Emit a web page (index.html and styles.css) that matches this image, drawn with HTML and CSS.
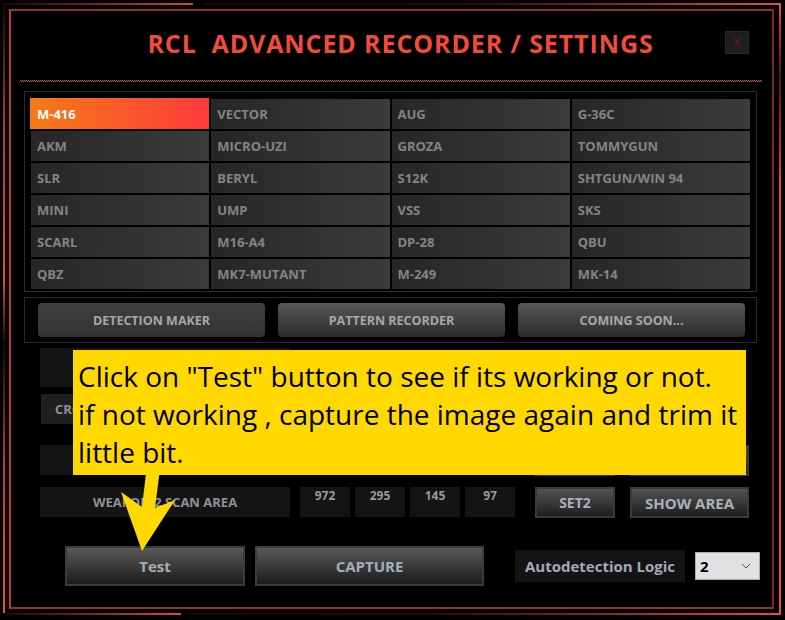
FILE: index.html
```html
<!DOCTYPE html>
<html>
<head>
  <title>RCL Advanced Recorder / Settings</title>
  <link rel="stylesheet" href="styles.css">
</head>
<body>
  <div class="frame-outer">
    <div class="frame-inner">
      <div class="header">
        <div class="title">RCL&nbsp; ADVANCED RECORDER / SETTINGS</div>
        <div class="close">X</div>
      </div>
      <div class="dots"></div>

      <div class="panel weapons">
        <div class="cell active">M-416</div>
        <div class="cell">VECTOR</div>
        <div class="cell">AUG</div>
        <div class="cell">G-36C</div>
        <div class="cell">AKM</div>
        <div class="cell">MICRO-UZI</div>
        <div class="cell">GROZA</div>
        <div class="cell">TOMMYGUN</div>
        <div class="cell">SLR</div>
        <div class="cell">BERYL</div>
        <div class="cell">S12K</div>
        <div class="cell">SHTGUN/WIN 94</div>
        <div class="cell">MINI</div>
        <div class="cell">UMP</div>
        <div class="cell">VSS</div>
        <div class="cell">SKS</div>
        <div class="cell">SCARL</div>
        <div class="cell">M16-A4</div>
        <div class="cell">DP-28</div>
        <div class="cell">QBU</div>
        <div class="cell">QBZ</div>
        <div class="cell">MK7-MUTANT</div>
        <div class="cell">M-249</div>
        <div class="cell">MK-14</div>
      </div>

      <div class="panel tabs">
        <div class="tab current">DETECTION MAKER</div>
        <div class="tab">PATTERN RECORDER</div>
        <div class="tab">COMING SOON...</div>
      </div>

      <div class="area">
        <div class="row row-a">
          <div class="label-box tall"></div>
        </div>
        <div class="row row-b">
          <div class="label-box light">CROSSHAIR SCAN AREA</div>
        </div>
        <div class="row row-c">
          <div class="label-box"></div>
          <div class="nums">
            <div class="num"></div>
            <div class="num"></div>
            <div class="num"></div>
            <div class="num"></div>
          </div>
          <div class="btn set"></div>
          <div class="btn show"></div>
        </div>
        <div class="row row-d">
          <div class="label-box">WEAPON 2 SCAN AREA</div>
          <div class="nums">
            <div class="num">972</div>
            <div class="num">295</div>
            <div class="num">145</div>
            <div class="num">97</div>
          </div>
          <div class="btn set">SET2</div>
          <div class="btn show">SHOW AREA</div>
        </div>
      </div>

      <div class="bottom">
        <div class="big-btn test">Test</div>
        <div class="big-btn capture">CAPTURE</div>
        <div class="logic">Autodetection Logic</div>
        <div class="select">
          <span>2</span>
          <svg width="10" height="6" viewBox="0 0 10 6"><path d="M1 1 L5 5 L9 1" fill="none" stroke="#555" stroke-width="1"/></svg>
        </div>
      </div>
    </div>
  </div>

  <!-- tutorial overlay -->
  <div class="callout">
    Click on "Test" button to see if its working or not.<br>
    if not working , capture the image again and trim it<br>
    little bit.
  </div>
  <svg class="arrow" width="70" height="90" viewBox="115 465 70 90">
    <polygon points="147,465 160.5,465 155,508 175,500 142,551 121,492 142,507" fill="#ffd800"/>
  </svg>
</body>
</html>
```

FILE: styles.css
```css
body {
  margin: 0;
  width: 785px;
  height: 620px;
  overflow: hidden;
  background: #000;
  font-family: "Open Sans", "Noto Sans", sans-serif;
}

/* double red frame round the window */
.frame-outer {
  width: 778px;
  height: 612px;
  margin: 3px;
  box-sizing: border-box;
  padding: 6px 7px 6px 6px;
  background:
    linear-gradient(to right, #1c0606, #d8463a 190px, transparent 190px 199px, #1a0505 199px, #2a0a08 60%, #ef4a3c) top / 100% 2px no-repeat,
    linear-gradient(to right, #1c0606, #e04a3c 178px, transparent 178px 184px, #150303 184px, #2a0a08 55%, #ee4a3c) bottom / 100% 2px no-repeat,
    linear-gradient(#1a0505, #b8382e 20%, #e04a3c 45%, #1a0505 56%, #c03c30 75%, #ee4a3c) left / 2px 100% no-repeat,
    linear-gradient(#ef4a3c, #5a1410 12%, #e84636 30%, #ef4a3c 100%) right / 2px 100% no-repeat;
}
.frame-inner {
  height: 100%;
  box-sizing: border-box;
  border: 2px solid #9a3129;
  border-left-color: #c23b31;
  border-right-color: #7c2620;
}

.header {
  display: grid;
  grid-template-columns: 1fr auto 1fr;
  align-items: center;
  height: 63px;
  padding-left: 18px;
}
.title {
  grid-column: 2;
  color: #f24b3c;
  font-size: 25px;
  font-weight: 700;
  line-height: 30px;
  letter-spacing: 0.9px;
  white-space: nowrap;
}
.close {
  justify-self: end;
  margin-right: 23px;
  width: 24px;
  height: 23px;
  box-sizing: border-box;
  background: #1e1e1e;
  border: 1px solid #2a2a2a;
  color: #7a1212;
  font-size: 13px;
  line-height: 21px;
  text-align: center;
}
.dots {
  height: 2px;
  margin: 6px 10px 0 9px;
  background:
    repeating-linear-gradient(to right, #e8503c 0 1px, transparent 1px 2px) top / 100% 1px no-repeat,
    repeating-linear-gradient(to right, transparent 0 1px, #e8503c 1px 2px) bottom / 100% 1px no-repeat;
}

.panel {
  margin: 0 15px 0 13px;
  border: 1px solid #2b2b2b;
}
.weapons {
  margin-top: 9px;
  padding: 7px 6px 2px 6px;
  display: grid;
  grid-template-columns: repeat(4, 1fr);
  grid-auto-rows: 30px;
  gap: 2px;
}
.cell {
  display: flex;
  align-items: center;
  padding-left: 6px;
  background: linear-gradient(to right, #262626, #3b3b3b);
  color: #848484;
  font-size: 13px;
  font-weight: 700;
  white-space: nowrap;
}
.cell.active {
  margin: -1px 0 0 -1px;
  padding-left: 7px;
  background: linear-gradient(to right, #f47b16, #ff3a3c);
  color: #fff;
}

.tabs {
  margin-top: 5px;
  padding: 5px 11px 5px 13px;
  display: flex;
  gap: 13px;
}
.tab {
  flex: 1;
  height: 34px;
  border-radius: 4px;
  background: linear-gradient(#575757, #2b2b2b);
  color: #a3a8ae;
  font-size: 12.5px;
  font-weight: 700;
  display: flex;
  align-items: center;
  justify-content: center;
}
.tab.current {
  background: linear-gradient(#404040, #333);
}

.area {
  margin-left: 29px;
}
.row {
  display: flex;
  align-items: flex-start;
}
.row-a { margin-top: 5px; }
.row-b { margin-top: 7px; }
.row-c { margin-top: 21px; }
.row-d { margin-top: 11px; }
.label-box {
  width: 250px;
  height: 30px;
  background: #141414;
  color: #8c9298;
  font-size: 13px;
  font-weight: 700;
  display: flex;
  align-items: center;
  justify-content: center;
}
.label-box.tall { height: 39px; }
.label-box.light {
  margin-left: 1px;
  justify-content: flex-start;
  padding-left: 14px;
  box-sizing: border-box;
  background: #1f1f1f;
}
.nums {
  display: flex;
  gap: 5px;
  margin-left: 10px;
}
.num {
  width: 50px;
  height: 30px;
  background: #141414;
  color: #9a9a9a;
  font-size: 12px;
  font-weight: 700;
  text-align: center;
  line-height: 18px;
}
.btn {
  height: 31px;
  box-sizing: border-box;
  border: 2px solid #3a3a3a;
  background: linear-gradient(#535353, #1e1e1e);
  color: #a9b0b8;
  font-weight: 700;
  display: flex;
  align-items: center;
  justify-content: center;
}
.btn.set {
  width: 80px;
  margin-left: 20px;
  font-size: 14px;
}
.btn.show {
  width: 119px;
  margin-left: 15px;
  font-size: 15px;
}

.bottom {
  display: flex;
  align-items: center;
  margin: 28px 0 0 54px;
}
.big-btn {
  height: 40px;
  box-sizing: border-box;
  border: 2px solid #3c3c3c;
  background: linear-gradient(#585858, #1c1c1c);
  color: #a6aeb6;
  font-size: 15px;
  font-weight: 700;
  display: flex;
  align-items: center;
  justify-content: center;
}
.test { width: 180px; }
.capture { width: 229px; margin-left: 10px; }
.logic {
  width: 170px;
  height: 32px;
  margin-left: 31px;
  background: #141414;
  color: #a3aab2;
  font-size: 15px;
  font-weight: 700;
  display: flex;
  align-items: center;
  justify-content: center;
}
.select {
  width: 65px;
  height: 28px;
  margin-left: 10px;
  box-sizing: border-box;
  border: 1px solid #adadad;
  background: #e1e1e1;
  display: flex;
  align-items: center;
  justify-content: space-between;
  padding: 0 8px 0 4px;
  font-size: 15px;
  font-weight: 700;
  color: #000;
}

/* yellow tutorial note drawn over the window */
.callout {
  position: absolute;
  left: 73px;
  top: 350px;
  width: 673px;
  height: 125px;
  box-sizing: border-box;
  padding: 7px 0 0 5px;
  background: #ffd800;
  color: #000;
  font-size: 28px;
  line-height: 38px;
  white-space: nowrap;
}
.arrow {
  position: absolute;
  left: 115px;
  top: 465px;
}
```
